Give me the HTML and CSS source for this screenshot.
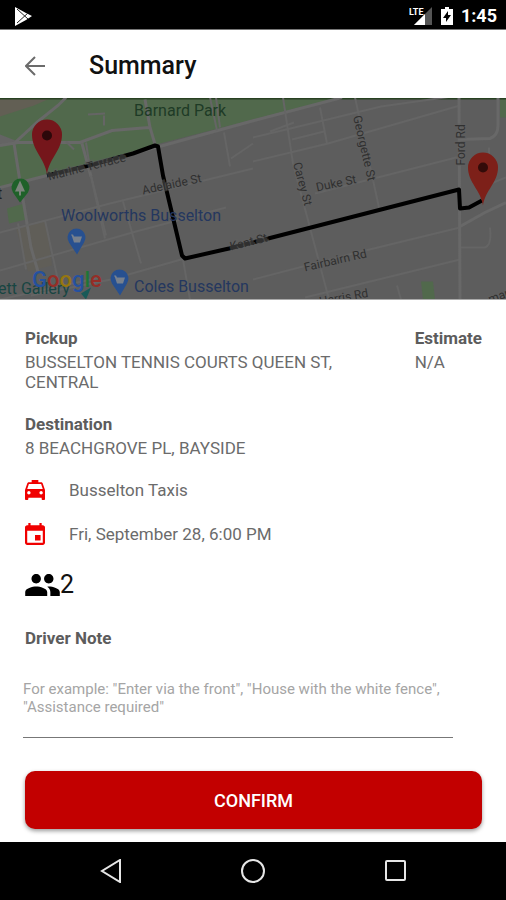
FILE: index.html
```html
<!DOCTYPE html>
<html lang="en">
    <head>
        <meta charset="utf-8">
        <meta name="viewport" content="width=device-width, initial-scale=1">
        <title>Summary</title>
        <link rel="stylesheet" href="styles.css">
    </head>
    <body>
        <div class="status-bar">
            <svg class="play-icon" width="20" height="20" viewBox="0 0 20 20">
                <path fill="#fff" d="M1 1l11 6 6 3-6 4-11 6z"/>
                <path stroke="#222" fill="none" d="M3 3l11 10M3 17L14 7"/>
            </svg>
            <div class="status-icons">
                <svg width="24" height="20" viewBox="0 0 24 20">
                    <path fill="#555" d="M23 1v18H5z"/>
                    <path fill="#000" d="M0 0h14v10H0z"/>
                    <path fill="#fff" d="M16 8v11H5z"/>
                    <text x="0" y="9" class="lte">LTE</text>
                </svg>
                <svg width="12" height="20" viewBox="0 0 12 20">
                    <path fill="#fff" d="M4 1h4v2h4v16H0V3h4z"/>
                    <path fill="#000" d="M7 5L2 12h3v4l5-7H7z"/>
                </svg>
                <span class="clock">1:45</span>
            </div>
        </div>

        <header class="app-bar">
            <button class="back-btn" aria-label="Back">
                <svg width="20" height="20" viewBox="0 0 20 20">
                    <path d="M20 10H2M10 1l-9 9 9 9"/>
                </svg>
            </button>
            <h1>Summary</h1>
        </header>

        <svg class="map" viewBox="0 0 506 202" preserveAspectRatio="xMidYMid slice">
            <rect width="506" height="202" fill="#5d5d5d"/>
            <!-- parks -->
            <path fill="#51694c" d="M0 0h338L253 22l-97 25L47 79 0 90z"/>
            <path fill="#625f54" d="M0 0h52L34 8 0 19z"/>
            <path fill="#646464" d="M0 37l18 7-18 5z"/>
            <path fill="#51694c" d="M7 111l17-5 2 16-17 4zM421 184h12l2 18h-12zM500 0h6v20h-6z"/>
            <path fill="#605e58" d="M16 130l30-8 6 46-24 6z"/>
            <path stroke="#284122" stroke-width="2" d="M0 1h506"/>
            <!-- roads -->
            <g class="roads">
                <path class="wide" d="M0 90l47-12 109-28 98-27 88-23"/>
                <path class="wide" d="M14 46l24-22L58 8l8-8M0 48l18-3 62 0 32-12 37-3M145 2l5 28 6 20M14 46l6 38 11 66 7 24M82 46l9 33"/>
                <path d="M91 79l14 62M104 18v10M88 17l17-1M210 0l7 33M66 44l8 8"/>
                <path d="M0 135l110-29 143-35M0 173l136-39 90-24M31 198l80-16 70-20 45-9M91 78l15 60M123 104l18 62M183 162l7 40M18 126l8 46M45 123l13 60M86 45l4 26"/>
                <path d="M224 35l6 34M216 0l4 30M231 61l22-15M0 202l100-22"/>
                <path d="M253 64l75-18 132-38M253 40l54-13 74-18 78-11M270 34l24-9M320 10l7 36M355 0l24 110M283 0l10 66 36 136M315 96l145-37M253 182l100-26 107-26M305 200l155-38M292 42l32-8"/>
                <path class="wide" d="M459 0l1 202M460 42l30-1q8-3 8-13V0M460 129l25-14 21-10"/>
                <path d="M461 150h24q7-2 5-20M397 188l4 14M489 50v10M486 88l20-8"/>
            </g>
            <!-- trip route -->
            <path class="route" d="M47 78l42-10 44-12 22-8 3 1 5 29 19 80 3 3 44-10 230-59 1 19 9-1 13-7"/>
            <g class="map-label">
                <text x="49" y="83" transform="rotate(-14 49 83)">Marine Terrace</text>
                <text x="143" y="97" transform="rotate(-12 143 97)">Adelaide St</text>
                <text x="231" y="153" transform="rotate(-14 231 153)">Kent St</text>
                <text x="293" y="66" transform="rotate(75 293 66)">Carey St</text>
                <text x="353" y="19" transform="rotate(77 353 19)">Georgette St</text>
                <text x="317" y="94" transform="rotate(-12 317 94)">Duke St</text>
                <text x="465" y="68" transform="rotate(-90 465 68)">Ford Rd</text>
                <text x="305" y="174" transform="rotate(-13 305 174)">Fairbairn Rd</text>
                <text x="320" y="208" transform="rotate(-10 320 208)">Harris Rd</text>
                <text x="490" y="206" transform="rotate(-20 490 206)">mar</text>
            </g>
            <text x="134" y="18" class="place park">Barnard Park</text>
            <text x="61" y="123" class="place">Woolworths Busselton</text>
            <text x="134" y="194" class="place">Coles Busselton</text>
            <text x="-2" y="196" class="place gallery">ett Gallery</text>
            <path fill="#185a58" d="M81 196q5-3 10-6l-5 12z"/>
            <text x="-3" y="101" class="place dark">t</text>
            <!-- small place markers -->
            <path fill="#1f6129" d="M20 105l-7-10a9 9 0 1 1 15 0z"/>
            <path fill="#7b847b" d="M20 83l5 11h-4v4h-2v-4h-4z"/>
            <g id="shop">
                <path fill="#275090" d="M77 157l-8-12a9 9 0 1 1 15 0z"/>
                <path fill="#77808d" d="M71 137h2l1 2h8l-2 6h-6l-2-6z"/>
            </g>
            <use href="#shop" x="43" y="41"/>
            <text x="32" y="189" class="google"><tspan fill="#2551a0">G</tspan><tspan fill="#962d26">o</tspan><tspan fill="#97760f">o</tspan><tspan fill="#2551a0">g</tspan><tspan fill="#1f7535">l</tspan><tspan fill="#962d26">e</tspan></text>
            <!-- pickup and destination pins -->
            <path fill="#75161b" d="M47 77c-2-16-15-24-15-40a15 15 0 0 1 30 0c0 16-13 24-15 40z"/>
            <circle cx="47" cy="38" r="5" fill="#2c080a"/>
            <path fill="#7d2019" d="M483 108c-2-15-15-23-15-38a15 15 0 0 1 30 0c0 15-13 23-15 38z"/>
            <circle cx="483" cy="70" r="5" fill="#330b09"/>
        </svg>

        <main class="details">
            <div class="trip-row">
                <div class="pickup">
                    <h2>Pickup</h2>
                    <p>BUSSELTON TENNIS COURTS QUEEN ST, CENTRAL</p>
                </div>
                <div class="estimate">
                    <h2>Estimate</h2>
                    <p>N/A</p>
                </div>
            </div>
            <div class="destination">
                <h2>Destination</h2>
                <p>8 BEACHGROVE PL, BAYSIDE</p>
            </div>

            <div class="info-row">
                <svg width="20" height="20" viewBox="3 3 18 18" preserveAspectRatio="none">
                    <path d="M18.92 6.01C18.72 5.42 18.16 5 17.5 5H15V3H9v2H6.500c-.66 0-1.210.42-1.420 1.010L3 12v8c0 .55.45 1 1 1h1c.55 0 1-.45 1-1v-1h12v1c0 .55.45 1 1 1h1c.55 0 1-.45 1-1v-8l-2.080-5.990zM6.500 16c-.83 0-1.500-.67-1.500-1.500S5.670 13 6.500 13s1.500.67 1.500 1.500S7.330 16 6.500 16zm11 0c-.83 0-1.500-.67-1.500-1.500s.67-1.500 1.500-1.500 1.500.67 1.500 1.500-.67 1.500-1.500 1.500zM5 11l1.500-4.500h11L19 11H5z"/>
                </svg>
                <span>Busselton Taxis</span>
            </div>
            <div class="info-row">
                <svg width="20" height="22" viewBox="3 1 18 20" preserveAspectRatio="none">
                    <path d="M17 12h-5v5h5v-5zM16 1v2H8V1H6v2H5c-1.110 0-2 .9-2 2v14c0 1.100.89 2 2 2h14c1.100 0 2-.9 2-2V5c0-1.100-.9-2-2-2h-1V1h-2zm3 18H5V8h14v11z"/>
                </svg>
                <span>Fri, September 28, 6:00 PM</span>
            </div>
            <div class="passengers">
                <svg width="35" height="22" viewBox="1 5 22 14">
                    <path d="M16 11c1.660 0 2.990-1.340 2.990-3S17.660 5 16 5s-3 1.340-3 3 1.340 3 3 3zm-8 0c1.660 0 2.990-1.340 2.990-3S9.660 5 8 5 5 6.340 5 8s1.340 3 3 3zm0 2c-2.330 0-7 1.170-7 3.500V19h14v-2.500c0-2.330-4.670-3.500-7-3.500zm8 0c-.29 0-.62.020-.97.050 1.160.84 1.970 1.970 1.970 3.450V19h6v-2.500c0-2.330-4.670-3.500-7-3.500z"/>
                </svg>
                <span>2</span>
            </div>

            <label for="driverNote">Driver Note</label>
            <textarea id="driverNote" rows="2" placeholder="For example: &quot;Enter via the front&quot;, &quot;House with the white fence&quot;, &quot;Assistance required&quot;"></textarea>
            <button class="confirm-btn">CONFIRM</button>
        </main>

        <nav class="nav-bar">
            <button aria-label="Back">
                <svg width="24" height="24" viewBox="0 0 24 24"><path d="M22 1v22L4 12z"/></svg>
            </button>
            <button aria-label="Home">
                <svg width="24" height="24" viewBox="0 0 24 24"><circle cx="12" cy="12" r="11"/></svg>
            </button>
            <button aria-label="Recent apps">
                <svg width="24" height="24" viewBox="0 0 24 24"><rect x="2" y="2" width="19" height="19" rx="1"/></svg>
            </button>
        </nav>
    </body>
</html>
```

FILE: styles.css
```css
* {
    box-sizing: border-box;
}

body {
    margin: 0;
    min-height: 100vh;
    display: flex;
    flex-direction: column;
    font-family: Roboto, sans-serif;
    font-size: 17px;
    line-height: 20px;
    color: #6b6b6b;
    background: #fff;
}

h1, h2, p {
    margin: 0;
}

button {
    font-family: inherit;
    border: none;
    padding: 0;
    background: none;
    cursor: pointer;
}

svg {
    display: block;
}

.status-bar {
    display: flex;
    align-items: center;
    justify-content: space-between;
    height: 30px;
    padding: 2px 9px 0 14px;
    background: #000;
    color: #fff;
    border-bottom: 1px solid #777;
}

.status-icons {
    display: flex;
    align-items: center;
    gap: 8px;
}

.lte {
    font-size: 9px;
    font-weight: 700;
    fill: #fff;
}

.clock {
    font-size: 18px;
    font-weight: 700;
}

.app-bar {
    display: flex;
    align-items: center;
    gap: 44px;
    height: 68px;
    padding: 4px 25px 0;
}

.back-btn svg {
    fill: none;
    stroke: #6b6b6b;
    stroke-width: 2;
}

h1 {
    font-size: 25px;
    line-height: 32px;
    font-weight: 500;
    color: #111;
}

.map {
    width: 100%;
    height: 202px;
    border-bottom: 1px solid #aaa;
}

.roads path {
    fill: none;
    stroke: #656565;
    stroke-width: 2;
}

.roads .wide {
    stroke: #686868;
    stroke-width: 3;
}

.route {
    fill: none;
    stroke: #000;
    stroke-width: 4;
    stroke-linejoin: round;
}

.map-label {
    font-size: 12px;
    fill: #303030;
    stroke: rgba(95, 95, 95, 0.5);
    stroke-width: 3;
    paint-order: stroke;
}

.place {
    font-size: 16px;
    fill: #24375f;
}

.park {
    fill: #1e3b26;
}

.gallery {
    fill: #184542;
}

.dark {
    fill: #222;
}

.google {
    font-size: 22px;
    font-weight: 500;
}

.details {
    flex: 1;
    display: flex;
    flex-direction: column;
    padding: 28px 24px 13px 25px;
}

h2, label {
    font-size: 17px;
    line-height: 20px;
    font-weight: 700;
    color: #5c5c5c;
}

h2 {
    margin-bottom: 4px;
}

.trip-row {
    display: flex;
    justify-content: space-between;
    gap: 60px;
    margin-bottom: 22px;
}

.destination {
    margin-bottom: 20px;
}

.info-row {
    display: flex;
    align-items: center;
    gap: 24px;
    height: 24px;
    margin-bottom: 20px;
}

.info-row svg {
    fill: #f00000;
}

.passengers {
    display: flex;
    align-items: center;
    height: 32px;
    margin: 3px 0 27px;
    font-size: 25px;
    color: #111;
}

.passengers svg {
    fill: #000;
}

textarea {
    margin: 32px 29px 32px -2px;
    padding: 0 0 20px;
    height: 58px;
    border: none;
    border-bottom: 1px solid #777;
    resize: none;
    outline: none;
    overflow: hidden;
    font-family: inherit;
    font-size: 15px;
    line-height: 18px;
    color: #333;
}

textarea::placeholder {
    color: #a5a5a5;
}

.confirm-btn {
    height: 58px;
    margin-top: auto;
    border-radius: 10px;
    background: #c20000;
    color: #fff;
    font-size: 18px;
    font-weight: 500;
    box-shadow: 0 2px 4px rgba(0, 0, 0, 0.4);
}

.nav-bar {
    display: flex;
    justify-content: space-between;
    align-items: center;
    height: 58px;
    padding: 0 98px;
    background: #000;
}

.nav-bar svg {
    fill: none;
    stroke: #e6e6e6;
    stroke-width: 2;
}
```
